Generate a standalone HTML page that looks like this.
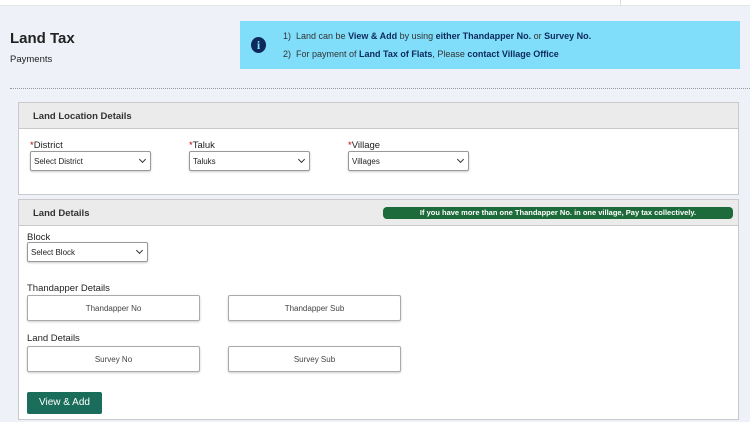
<!DOCTYPE html>
<html><head><style>
*{box-sizing:border-box;margin:0;padding:0}
body{width:750px;height:422px;overflow:hidden;background:#eef1f8;font-family:"Liberation Sans",sans-serif;position:relative;color:#222}
.a{position:absolute}
.top{left:0;top:0;width:750px;height:6px;background:#fff;border-bottom:1px solid #e4e6ea}
.info{left:240px;top:21px;width:500px;height:48px;background:#80defa;font-size:9px;color:#333}
.info b{color:#0d2a5a}
.panel{left:18px;width:721px;background:#fff;border:1px solid #c9c9c9}
.hd{height:26px;background:#ebebeb;border-bottom:1px solid #c9c9c9;font-size:9.5px;font-weight:bold;padding:8px 0 0 14px;color:#333}
.sel{height:20px;border:1px solid #999;border-radius:2px;background:#fff;font-size:8px;padding:5px 3px;box-shadow:0 1px 2px #ccc}
.sel:after{content:"";position:absolute;right:5px;top:5px;width:4px;height:4px;border-right:1.3px solid #333;border-bottom:1.3px solid #333;transform:rotate(45deg)}
.lbl{font-size:9.5px;color:#222}
.lbl i{color:#b00;font-style:normal}
.box{width:173px;height:26px;border:1px solid #aaa;border-radius:2px;background:#fff;font-size:8px;text-align:center;line-height:25px;color:#444;box-shadow:0 1px 2px #ccc}
</style></head><body>
<div class="a top"></div>
<div class="a" style="left:620px;top:0;width:1px;height:6px;background:#ddd"></div>
<div class="a" style="left:10px;top:30px;font-size:15px;font-weight:bold;color:#222">Land Tax</div>
<div class="a" style="left:10px;top:54px;font-size:9.5px">Payments</div>
<div class="a info">
<div class="a" style="left:11px;top:16px;width:15px;height:16px;border-radius:50%;background:#0d2a5a;color:#80defa;font-size:12px;font-weight:bold;text-align:center;line-height:16px;font-family:'Liberation Serif',serif">i</div>
<div class="a" style="left:43px;top:10px">1)&nbsp; Land can be <b>View &amp; Add</b> by using <b>either Thandapper No.</b> or <b>Survey No.</b></div>
<div class="a" style="left:43px;top:28px">2)&nbsp; For payment of <b>Land Tax of Flats</b>, Please <b>contact Village Office</b></div>
</div>
<div class="a" style="left:10px;top:88px;width:740px;border-top:1px dotted #999"></div>
<div class="a panel" style="top:102px;height:93px"><div class="hd">Land Location Details</div></div>
<div class="a lbl" style="left:30px;top:140px"><i>*</i>District</div>
<div class="a lbl" style="left:189px;top:140px"><i>*</i>Taluk</div>
<div class="a lbl" style="left:348px;top:140px"><i>*</i>Village</div>
<div class="a sel" style="left:30px;top:151px;width:121px">Select District</div>
<div class="a sel" style="left:189px;top:151px;width:121px">Taluks</div>
<div class="a sel" style="left:348px;top:151px;width:121px">Villages</div>
<div class="a panel" style="top:199px;height:221px"><div class="hd">Land Details</div></div>
<div class="a" style="left:383px;top:207px;width:350px;height:12px;background:#1d6a3a;border-radius:4px;color:#fff;font-size:7.5px;font-weight:bold;text-align:center;line-height:12px">If you have more than one Thandapper No. in one village, Pay tax collectively.</div>
<div class="a lbl" style="left:27px;top:232px">Block</div>
<div class="a sel" style="left:27px;top:242px;width:121px">Select Block</div>
<div class="a lbl" style="left:27px;top:283px">Thandapper Details</div>
<div class="a box" style="left:27px;top:295px">Thandapper No</div>
<div class="a box" style="left:228px;top:295px;width:173px">Thandapper Sub</div>
<div class="a lbl" style="left:27px;top:333px">Land Details</div>
<div class="a box" style="left:27px;top:346px">Survey No</div>
<div class="a box" style="left:228px;top:346px">Survey Sub</div>
<div class="a" style="left:27px;top:392px;width:75px;height:22px;background:#1a6d5a;border-radius:2px;color:#fff;font-size:10px;text-align:center;line-height:22px">View &amp; Add</div>
</body></html>
